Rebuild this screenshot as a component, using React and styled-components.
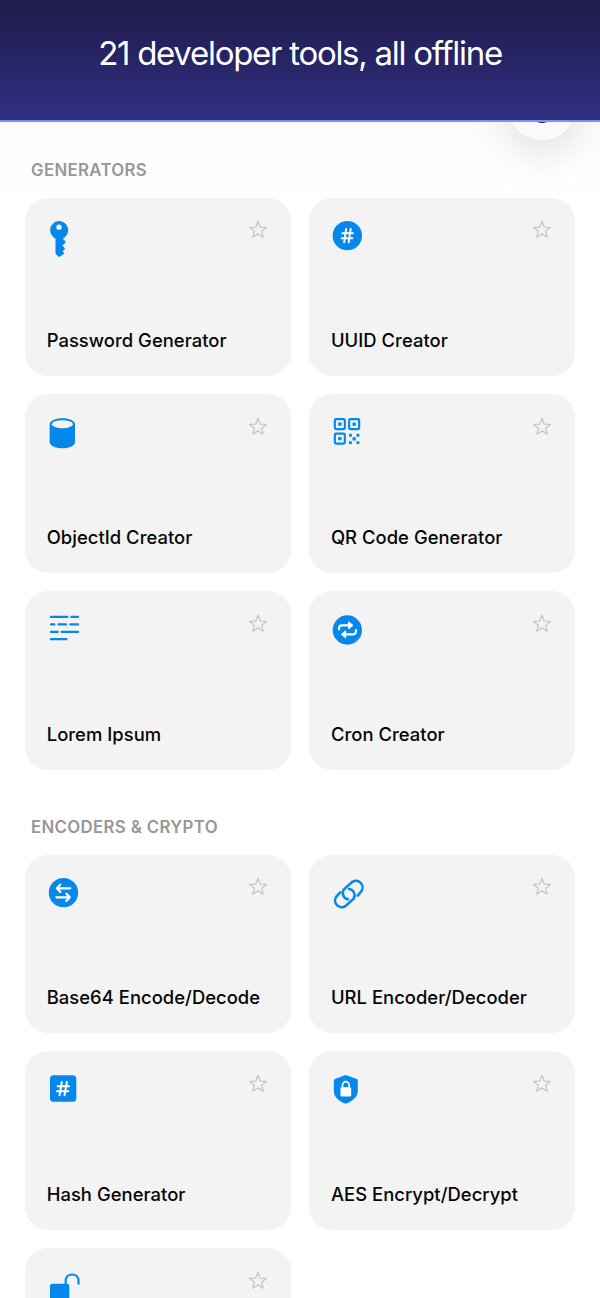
import React from "react";
import styled, { createGlobalStyle } from "styled-components";

const BLUE = "#0588ea";
const CARD = "#f3f3f3";

const GlobalStyle = createGlobalStyle`
  * {
    box-sizing: border-box;
  }
  body {
    margin: 0;
    background: #ffffff;
    font-family: Inter, "Liberation Sans", sans-serif;
  }
`;

// every icon is drawn on a 132 unit grid
const icons = {
  key: (
    <path
      fillRule="evenodd"
      d="M42 15a27.500 27.500 0 0 1 11.500 52.500l7.500 8.500q1.500 2 0 4l-9 8.500 7 7.500q1.500 2 0 4l-6 6l3.500 4q1.500 1.500 0 3l-11 8.500q-3 2-5.500 0l-6-6q-2.500-2-2.500-4.500V67.500A27.500 27.500 0 0 1 42 15zm0 10.500a8 8 0 1 0 0 16a8 8 0 1 0 0-16z"
    />
  ),
  hashCircle: (
    <>
      <circle cx="55" cy="59" r="44" />
      <path
        d="M51.500 39l-6 40M65 39l-6 40M40 51.500h32M38 66.500h32"
        stroke="#fff"
        strokeWidth="5.800"
        strokeLinecap="round"
      />
    </>
  ),
  database: (
    <>
      <path d="M14 34c0-10 16-18 38-18s38 8 38 18v54c0 10-16 18-38 18s-38-8-38-18z" />
      <ellipse cx="52" cy="33.500" rx="31.500" ry="12" fill={CARD} />
    </>
  ),
  qr: (
    <>
      <g fill="none" stroke={BLUE} strokeWidth="6.500">
        <rect x="17.500" y="18.500" width="30" height="30" rx="4" />
        <rect x="60.500" y="18.500" width="30" height="30" rx="4" />
        <rect x="17.500" y="62" width="30" height="30" rx="4" />
      </g>
      <path d="M27.500 28.500h10v10h-10zM70.500 28.500h10v10h-10zM27.500 72h10v10h-10zM60 62.500h8.500v8.500h-8.500zM82.500 62.500h8.500v8.500h-8.500zM70.500 72.500h10v10h-10zM60 84.500h8.500v8.500h-8.500zM82.500 84.500h8.500v8.500h-8.500z" />
    </>
  ),
  lines: (
    <path
      d="M18 20.500h49M79 20.500h20M18 43h10M41 43h22M76 43h23M18 65.500h20M50 65.500h49M18 87.500h46"
      stroke={BLUE}
      strokeWidth="7"
      strokeLinecap="round"
    />
  ),
  repeat: (
    <>
      <circle cx="55" cy="60" r="44" />
      <path
        d="M30 58v-3q0-9 9-9h20M81 60v3q0 10-9 10H52"
        fill="none"
        stroke="#fff"
        strokeWidth="6.500"
        strokeLinecap="round"
      />
      <path
        d="M59 35.500v21l13-10.500zM50 62.500v21l-13-10.500z"
        fill="#fff"
        stroke="#fff"
        strokeWidth="3"
        strokeLinejoin="round"
      />
    </>
  ),
  swap: (
    <>
      <circle cx="55.500" cy="59" r="44" />
      <path
        d="M76 46H37M46 35L35.500 46L46 57M34 73h39M64 62l10.500 11L64 84"
        fill="none"
        stroke="#fff"
        strokeWidth="6.500"
        strokeLinecap="round"
        strokeLinejoin="round"
      />
    </>
  ),
  link: (
    <path
      d="M86 68L97.400 54.400A20 20 0 0 0 70 26.500L45 49A19 19 0 0 0 57 79M33.500 58L21.600 71.600A20 20 0 0 0 49 99.500L74 77A19 19 0 0 0 60 48"
      fill="none"
      stroke={BLUE}
      strokeWidth="7.500"
      strokeLinecap="round"
    />
  ),
  hashSquare: (
    <>
      <rect x="15" y="15.500" width="79" height="80" rx="11" />
      <path
        d="M50.500 36l-7 40M65.500 36l-7 40M38 48.500h34M36 63.500h34"
        stroke="#fff"
        strokeWidth="6"
        strokeLinecap="round"
      />
    </>
  ),
  shield: (
    <>
      <path d="M47.500 15.500q2.500-1 5 0L83 27q3.500 1.500 3.500 5v30c0 19-15 29-32 38q-4.500 2.500-9 0c-17-9-31-19-31-38V32q0-3.500 3.500-5z" />
      <rect x="34.500" y="52" width="32" height="27.500" rx="4" fill="#fff" />
      <path
        d="M40.500 54V46a10 11 0 0 1 20 0v8"
        fill="none"
        stroke="#fff"
        strokeWidth="5"
      />
    </>
  ),
  unlock: (
    <>
      <rect x="15" y="50" width="58" height="62" rx="7" />
      <path
        d="M62 52V38a19.500 18.500 0 0 1 38.500 0v12"
        fill="none"
        stroke={BLUE}
        strokeWidth="6.500"
        strokeLinecap="round"
      />
    </>
  ),
};

const sections = [
  {
    title: "GENERATORS",
    tools: [
      { name: "Password Generator", icon: "key" },
      { name: "UUID Creator", icon: "hashCircle" },
      { name: "ObjectId Creator", icon: "database" },
      { name: "QR Code Generator", icon: "qr" },
      { name: "Lorem Ipsum", icon: "lines" },
      { name: "Cron Creator", icon: "repeat" },
    ],
  },
  {
    title: "ENCODERS & CRYPTO",
    tools: [
      { name: "Base64 Encode/Decode", icon: "swap" },
      { name: "URL Encoder/Decoder", icon: "link" },
      { name: "Hash Generator", icon: "hashSquare" },
      { name: "AES Encrypt/Decrypt", icon: "shield" },
      { name: "", icon: "unlock" },
    ],
  },
];

const Star = () => (
  <StarIcon viewBox="-10 -10 20 20">
    <path d="M0-8.700L2.200-2.900L8.400-2.600L3.600 1.200L5.200 7.200L0 3.900L-5.200 7.200L-3.600 1.200L-8.400-2.600L-2.200-2.900Z" />
  </StarIcon>
);

const App = () => {
  return (
    <Screen>
      <GlobalStyle />
      <Header>
        <h1>21 developer tools, all offline</h1>
      </Header>
      <FloatingButton>
        <span />
      </FloatingButton>
      <Content>
        {sections.map((section) => (
          <Section key={section.title}>
            <SectionTitle>{section.title}</SectionTitle>
            <Grid>
              {section.tools.map((tool) => (
                <Card key={tool.icon}>
                  <CardTop>
                    <ToolIcon viewBox="0 0 132 132">{icons[tool.icon]}</ToolIcon>
                    <Star />
                  </CardTop>
                  <ToolName>{tool.name}</ToolName>
                </Card>
              ))}
            </Grid>
          </Section>
        ))}
      </Content>
    </Screen>
  );
};

const Screen = styled.div`
  position: relative;
  width: 600px;
  height: 1298px;
  overflow: hidden;
  background: linear-gradient(#fcfcfc 122px, #ffffff 200px);
`;

const Header = styled.header`
  position: relative;
  z-index: 2;
  height: 122px;
  display: flex;
  justify-content: center;
  padding-top: 33px;
  background: linear-gradient(#1e1b4b, #312e81) padding-box;
  border-bottom: 2px solid #818cf8;
  h1 {
    margin: 0;
    font-size: 33px;
    font-weight: 400;
    line-height: 40px;
    letter-spacing: -1.28px;
    color: #ffffff;
    white-space: nowrap;
  }
`;

/* mostly hidden behind the header, only its lower edge shows */
const FloatingButton = styled.div`
  position: absolute;
  z-index: 1;
  top: 70px;
  left: 507px;
  width: 70px;
  height: 70px;
  border-radius: 50%;
  background: #fafafa;
  border: 1px solid #ffffff;
  box-shadow: 0 12px 40px rgba(0, 0, 0, 0.12);
  display: flex;
  justify-content: center;
  align-items: flex-end;
  padding-bottom: 16px;
  span {
    width: 22px;
    height: 22px;
    border-radius: 50%;
    background: #16134a;
  }
`;

const Content = styled.main`
  padding: 36px 25px 0;
`;

const Section = styled.section`
  margin-bottom: 45.500px;
`;

const SectionTitle = styled.h2`
  margin: 0 0 15.500px;
  padding-left: 6px;
  font-size: 16.800px;
  font-weight: 600;
  line-height: 24px;
  letter-spacing: 0.35px;
  color: #979797;
`;

const Grid = styled.div`
  display: grid;
  grid-template-columns: 1fr 1fr;
  grid-auto-rows: 178.500px;
  gap: 18.300px 18.500px;
`;

const Card = styled.div`
  display: flex;
  flex-direction: column;
  justify-content: space-between;
  padding: 18.500px 21px 24px 20px;
  border-radius: 23px;
  background: ${CARD};
`;

const CardTop = styled.div`
  display: flex;
  justify-content: space-between;
  align-items: flex-start;
`;

const ToolIcon = styled.svg`
  width: 44px;
  height: 44px;
  fill: ${BLUE};
`;

const StarIcon = styled.svg`
  width: 20px;
  height: 20px;
  margin: 4px 2px 0 0;
  fill: none;
  stroke: #c6c6c8;
  stroke-width: 1.3;
  stroke-linejoin: round;
`;

const ToolName = styled.p`
  margin: 0;
  padding-left: 1.700px;
  font-size: 18.400px;
  font-weight: 500;
  line-height: 24px;
  letter-spacing: 0.04px;
  color: #050505;
  white-space: nowrap;
`;

export default App;
